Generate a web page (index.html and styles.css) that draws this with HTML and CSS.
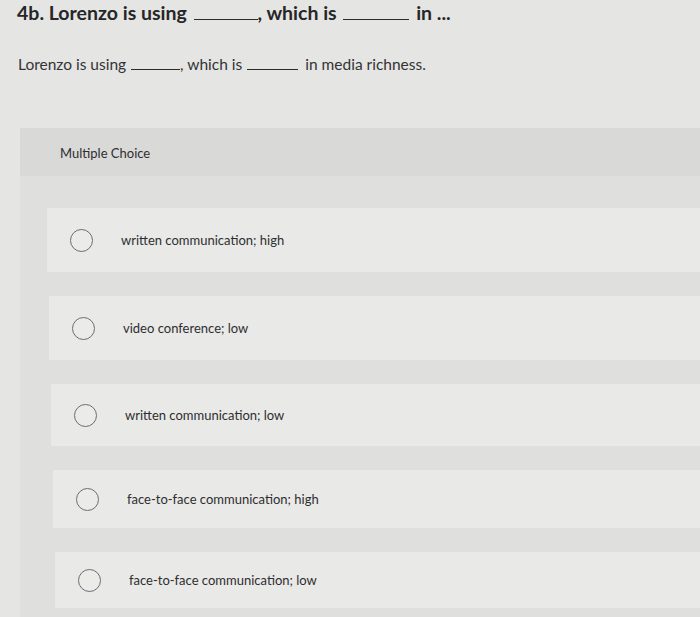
FILE: index.html
```html
<!DOCTYPE html>
<html>
<head>
<meta charset="utf-8">
<link rel="stylesheet" href="styles.css">
</head>
<body>
<div class="page">
  <h1 class="title">4b. Lorenzo is using <span class="blank blank-lg"></span>, which is <span class="blank blank-lg2"></span> in ...</h1>
  <p class="prompt">Lorenzo is using <span class="blank blank-sm"></span>, which is <span class="blank blank-sm2"></span> in media richness.</p>
  <section class="panel">
    <div class="panel-head">Multiple Choice</div>
    <div class="panel-body">
      <div class="option"><span class="radio"></span><span class="label">written communication; high</span></div>
      <div class="option"><span class="radio"></span><span class="label">video conference; low</span></div>
      <div class="option"><span class="radio"></span><span class="label">written communication; low</span></div>
      <div class="option"><span class="radio"></span><span class="label">face-to-face communication; high</span></div>
      <div class="option"><span class="radio"></span><span class="label">face-to-face communication; low</span></div>
    </div>
  </section>
</div>
</body>
</html>
```

FILE: styles.css
```css
html, body {
  margin: 0;
  padding: 0;
}
body {
  background: #e5e5e3;
  font-family: Lato, "Open Sans", "Liberation Sans", sans-serif;
  color: #2b2b2d;
  width: 700px;
  height: 617px;
  overflow: hidden;
}
.title {
  margin: 0;
  padding: 0 0 0 17px;
  font-size: 19.5px;
  font-weight: 700;
  line-height: 26px;
  color: #262628;
  white-space: nowrap;
}
.blank {
  display: inline-block;
  vertical-align: baseline;
  border-bottom: 1.5px solid #2b2b2d;
  height: 0;
}
.blank-lg { width: 64px; margin: 0 0 0 2px; }
.blank-lg2 { width: 66px; margin: 0 2px 0 2px; }
.blank-sm { width: 49px; border-bottom-width: 1px; margin-left: 1px; }
.blank-sm2 { width: 51px; border-bottom-width: 1px; margin: 0 3px 0 1px; }
.prompt {
  margin: 0;
  padding: 27px 0 0 18px;
  font-size: 15.5px;
  line-height: 22px;
  color: #333335;
  white-space: nowrap;
}
.panel {
  margin: 53px 0 0 20px;
  background: #dfdfdd;
}
.panel-head {
  height: 48px;
  line-height: 50px;
  padding-left: 40px;
  font-size: 13px;
  color: #2e2e30;
  background: #d9d9d7;
}
.panel-body {
  padding: 32px 0 10px 27px;
  display: flex;
  flex-direction: column;
  gap: 24px;
}
.option {
  height: 64px;
  background: #e9e9e7;
  display: flex;
  align-items: center;
  padding-left: 23px;
}
.option:nth-child(2) { margin-left: 2px; }
.option:nth-child(3) { margin-left: 4px; height: 62px; }
.option:nth-child(4) { margin-left: 6px; height: 58px; }
.option:nth-child(5) { margin-left: 8px; height: 56px; }
.radio {
  width: 23px;
  height: 23px;
  border: 1.5px solid #6c6c74;
  border-radius: 50%;
  box-sizing: border-box;
  flex: none;
  background: #ebebea;
}
.label {
  margin-left: 28px;
  font-size: 13px;
  color: #2e2e30;
}
```
